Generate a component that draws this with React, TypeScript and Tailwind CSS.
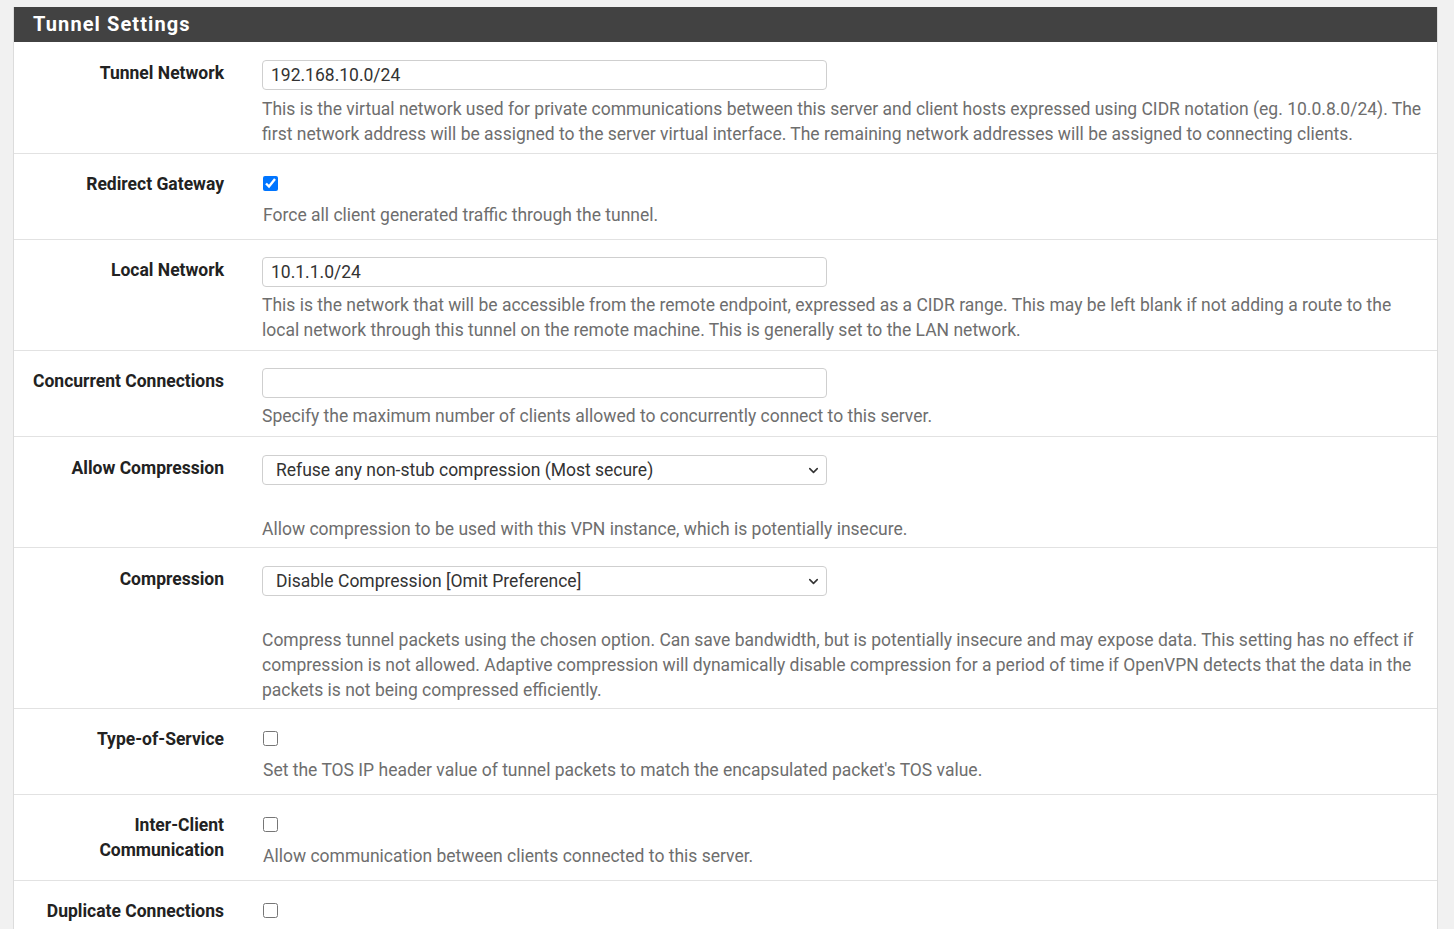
import React from 'react';
import { ChevronDown } from 'lucide-react';

type Row =
  | { kind: 'input'; label: string[]; value: string; help: string; }
  | { kind: 'select'; label: string[]; value: string; help: string; }
  | { kind: 'check'; label: string[]; checked: boolean; help?: string; };

const rows: Row[] = [
  {
    kind: 'input',
    label: ['Tunnel Network'],
    value: '192.168.10.0/24',
    help: 'This is the virtual network used for private communications between this server and client hosts expressed using CIDR notation (eg. 10.0.8.0/24). The first network address will be assigned to the server virtual interface. The remaining network addresses will be assigned to connecting clients.',
  },
  {
    kind: 'check',
    label: ['Redirect Gateway'],
    checked: true,
    help: 'Force all client generated traffic through the tunnel.',
  },
  {
    kind: 'input',
    label: ['Local Network'],
    value: '10.1.1.0/24',
    help: 'This is the network that will be accessible from the remote endpoint, expressed as a CIDR range. This may be left blank if not adding a route to the local network through this tunnel on the remote machine. This is generally set to the LAN network.',
  },
  {
    kind: 'input',
    label: ['Concurrent Connections'],
    value: '',
    help: 'Specify the maximum number of clients allowed to concurrently connect to this server.',
  },
  {
    kind: 'select',
    label: ['Allow Compression'],
    value: 'Refuse any non-stub compression (Most secure)',
    help: 'Allow compression to be used with this VPN instance, which is potentially insecure.',
  },
  {
    kind: 'select',
    label: ['Compression'],
    value: 'Disable Compression [Omit Preference]',
    help: 'Compress tunnel packets using the chosen option. Can save bandwidth, but is potentially insecure and may expose data. This setting has no effect if compression is not allowed. Adaptive compression will dynamically disable compression for a period of time if OpenVPN detects that the data in the packets is not being compressed efficiently.',
  },
  {
    kind: 'check',
    label: ['Type-of-Service'],
    checked: false,
    help: "Set the TOS IP header value of tunnel packets to match the encapsulated packet's TOS value.",
  },
  {
    kind: 'check',
    label: ['Inter-Client', 'Communication'],
    checked: false,
    help: 'Allow communication between clients connected to this server.',
  },
  {
    kind: 'check',
    label: ['Duplicate Connections'],
    checked: false,
  },
];

function Label({ lines }: { lines: string[] }) {
  return (
    <div className="w-[210px] shrink-0 pt-[1px] text-right font-bold text-[#222] leading-[25px]">
      {lines.map((l) => (
        <div key={l}>{l}</div>
      ))}
    </div>
  );
}

function FormRow({ row, first }: { row: Row; first?: boolean }) {
  if (row.kind === 'check') {
    return (
      <div className="flex border-b border-[#e2e2e2] pt-[17px] pb-[11px]">
        <Label lines={row.label} />
        <div className="ml-[38px] mr-[15px] flex-1">
          <div className="h-[25px] flex items-center pl-[1px]">
            <input
              type="checkbox"
              defaultChecked={row.checked}
              className="w-[15px] h-[15px] m-0 accent-[#0075ff]"
            />
          </div>
          {row.help && (
            <div className="mt-[7px] pl-[1px] text-[#6e6e6e]">{row.help}</div>
          )}
        </div>
      </div>
    );
  }

  if (row.kind === 'select') {
    return (
      <div className="flex border-b border-[#e2e2e2] pt-[18px] pb-[5px]">
        <Label lines={row.label} />
        <div className="ml-[38px] mr-[15px] flex-1">
          <div className="relative w-[565px] h-[30px] border border-[#cfcfcf] rounded-[4px] flex items-center pl-[13px] text-[#333]">
            <span>{row.value}</span>
            <ChevronDown size={15} strokeWidth={2.5} className="absolute right-[5px] top-[7px] text-[#333]" />
          </div>
          <div className="h-[25px]" />
          <div className="mt-[7px] text-[#6e6e6e]">{row.help}</div>
        </div>
      </div>
    );
  }

  return (
    <div className={`flex border-b border-[#e2e2e2] ${first ? 'pt-[18px] pb-[6px]' : 'pt-[17px] pb-[7px]'}`}>
      <Label lines={row.label} />
      <div className="ml-[38px] mr-[15px] flex-1">
        <input
          type="text"
          defaultValue={row.value}
          className="block w-[565px] h-[30px] px-[8px] border border-[#cfcfcf] rounded-[4px] text-[#333] text-[17.5px] outline-none"
        />
        <div className={`${first ? 'mt-[7px]' : 'mt-[6px]'} text-[#6e6e6e]`}>{row.help}</div>
      </div>
    </div>
  );
}

export default function App() {
  return (
    <div
      className="min-h-screen bg-[#f1f1f1] pt-[7px] pl-[13px] pr-[16px] text-[17.5px] leading-[25px]"
      style={{ fontFamily: 'Roboto, "Noto Sans", sans-serif' }}
    >
      <div className="border border-[#dcdcdc] border-t-0 bg-white">
        <div className="h-[35px] bg-[#424242] flex items-center pl-[19px]">
          <h2 className="text-white font-bold text-[20px] tracking-[1.1px]">Tunnel Settings</h2>
        </div>
        {rows.map((r, i) => (
          <FormRow key={r.label.join(' ')} row={r} first={i === 0} />
        ))}
      </div>
    </div>
  );
}
